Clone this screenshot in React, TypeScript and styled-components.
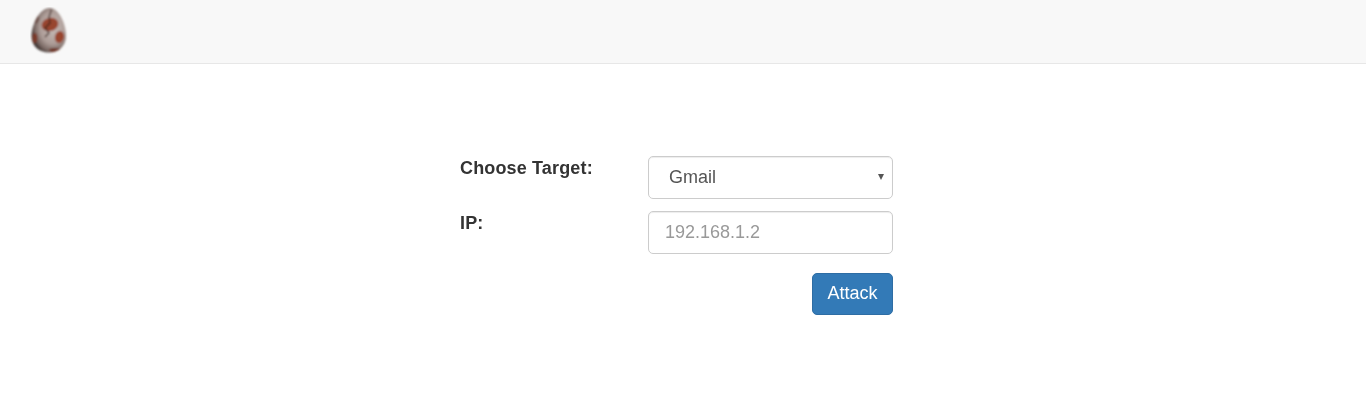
import React from "react";
import styled, { createGlobalStyle } from "styled-components";

const Global = createGlobalStyle`
  html, body { margin: 0; padding: 0; background: #fff; }
  body { font-family: "Liberation Sans", Arial, sans-serif; color: #333; }
  * { box-sizing: border-box; }
`;

const Navbar = styled.nav`
  height: 64px;
  background: #f8f8f8;
  border-bottom: 1px solid #e7e7e7;
  display: flex;
  align-items: flex-start;
  padding: 7px 0 0 30px;
`;

const Form = styled.form`
  width: 433px;
  margin: 92px 0 0 460px;
  display: flex;
  flex-direction: column;
  will-change: transform;
`;

const Row = styled.div`
  display: grid;
  grid-template-columns: 188px 245px;
  margin-bottom: 12px;
`;

const Label = styled.label`
  font-size: 18px;
  font-weight: 700;
  letter-spacing: 0.15px;
  line-height: 24px;
  color: #333;
`;

const control = `
  width: 100%;
  height: 43px;
  border: 1px solid #ccc;
  border-radius: 5px;
  background: #fff;
  font-family: "Liberation Sans", Arial, sans-serif;
  font-size: 18px;
  box-shadow: inset 0 1px 1px rgba(0, 0, 0, 0.075);
  outline: none;
`;

const SelectWrap = styled.div`
  position: relative;
  &::after {
    content: "";
    position: absolute;
    right: 9px;
    top: 18px;
    border-left: 3.5px solid transparent;
    border-right: 3.5px solid transparent;
    border-top: 6px solid #555;
    pointer-events: none;
  }
`;

const Select = styled.select`
  ${control}
  appearance: none;
  padding: 0 20px 2px;
  color: #555;
`;

const Input = styled.input`
  ${control}
  padding: 0 16px;
  color: #555;
  &::placeholder { color: #999; opacity: 1; }
`;

const Actions = styled.div`
  display: flex;
  justify-content: flex-end;
  margin-top: 7px;
`;

const Button = styled.button`
  height: 42px;
  width: 81px;
  border: 1px solid #2e6da4;
  border-radius: 5px;
  background: #337ab7;
  color: #fff;
  font-family: "Liberation Sans", Arial, sans-serif;
  font-size: 18px;
  padding: 0 0 2px;
`;

const eggPath = "M19.5 1C29 1 36 17 36 29C36 39 28.5 45.5 19 45.5C9 45.5 1.5 39 1.5 29C1.5 17 10 1 19.5 1Z";

const Egg = () => (
  <svg width="40" height="48" viewBox="0 0 40 48" aria-label="logo">
    <defs>
      <radialGradient id="shell" cx="0.62" cy="0.44" r="0.66">
        <stop offset="0" stopColor="#c6bbb7" />
        <stop offset="0.55" stopColor="#ad9d98" />
        <stop offset="0.8" stopColor="#7a6964" />
        <stop offset="1" stopColor="#2b2423" />
      </radialGradient>
      <filter id="soft" x="-10%" y="-10%" width="120%" height="120%">
        <feGaussianBlur stdDeviation="0.8" />
      </filter>
      <clipPath id="eggClip">
        <path d={eggPath} />
      </clipPath>
    </defs>
    <g filter="url(#soft)">
      <path d={eggPath} fill="url(#shell)" />
      <g clipPath="url(#eggClip)">
        <ellipse cx="20" cy="17.5" rx="8.5" ry="6.5" fill="#98452f" transform="rotate(-15 20 17.5)" />
        <ellipse cx="29.5" cy="30" rx="4.5" ry="6" fill="#98442f" transform="rotate(15 29.5 30)" />
        <ellipse cx="5" cy="31" rx="2.5" ry="5" fill="#7a3a2b" />
        <ellipse cx="25" cy="43" rx="6" ry="2" fill="#6d3528" />
        <ellipse cx="7" cy="13" rx="1.8" ry="4" fill="#6c4f48" transform="rotate(20 7 13)" />
      </g>
      <path d="M21.5 2.5L19 10L20 16L15 21L19 26L15 30" fill="none" stroke="#3a221d" strokeWidth="1.2" />
    </g>
  </svg>
);

export default function App() {
  return (
    <>
      <Global />
      <Navbar>
        <Egg />
      </Navbar>
      <Form>
        <Row>
          <Label>Choose Target:</Label>
          <SelectWrap>
            <Select defaultValue="Gmail">
              <option>Gmail</option>
            </Select>
          </SelectWrap>
        </Row>
        <Row>
          <Label>IP:</Label>
          <Input placeholder="192.168.1.2" />
        </Row>
        <Actions>
          <Button type="button">Attack</Button>
        </Actions>
      </Form>
    </>
  );
}
